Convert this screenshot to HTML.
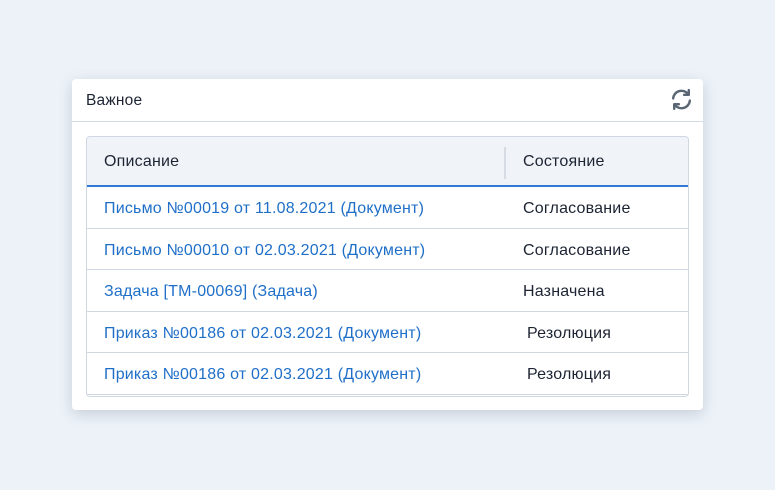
<!DOCTYPE html>
<html><head><meta charset="utf-8"><style>
body{margin:0;width:775px;height:490px;background:#edf2f8;font-family:"Liberation Sans",sans-serif;position:relative;overflow:hidden}
.card{position:absolute;left:72px;top:79px;width:631px;height:331px;background:#fff;border-radius:4px;box-shadow:0 4px 14px rgba(60,80,110,.22)}
.hd{height:42px;border-bottom:1px solid #d3dae4;position:relative}
.hd span{position:absolute;left:14px;top:13px;font-size:15.5px;color:#1c2433;letter-spacing:0.2px}
.tbl{position:absolute;left:14px;top:57px;width:601px;height:259px;border:1px solid #cfd7e2;border-radius:4px;overflow:hidden}
.th{height:48px;background:#f0f3f7;border-bottom:2px solid #2f7ad6;position:relative;font-size:16px;color:#1c2433;letter-spacing:0.2px}
.th .a{position:absolute;left:17px;top:16px}
.th .b{position:absolute;left:436px;top:16px}
.th .d{position:absolute;left:417px;top:10px;width:2px;height:32px;background:#d6dce4}
.r{height:40.5px;border-bottom:1px solid #cfd7e2;position:relative;font-size:16px;letter-spacing:0.2px}
.r .a{position:absolute;left:17px;top:13px;color:#1f6fc9}
.r .b{position:absolute;left:436px;top:13px;color:#1c2433}
</style></head><body>
<div class="card">
<div class="hd"><span>Важное</span>
<svg style="position:absolute;left:597px;top:8px" width="25" height="25" viewBox="0 0 24 24" fill="none" stroke="#5b6675" stroke-width="2.3" stroke-linecap="round" stroke-linejoin="round"><path d="M4 11a8 8 0 0 1 14.5-4"/><path d="M19 3v4.5h-4.5"/><path d="M20 13a8 8 0 0 1-14.5 4"/><path d="M5 21v-4.5h4.5"/></svg>
</div>
<div class="tbl">
<div class="th"><span class="a">Описание</span><span class="d"></span><span class="b">Состояние</span></div>
<div class="r"><span class="a">Письмо №00019 от 11.08.2021 (Документ)</span><span class="b">Согласование</span></div>
<div class="r"><span class="a">Письмо №00010 от 02.03.2021 (Документ)</span><span class="b">Согласование</span></div>
<div class="r"><span class="a">Задача [ТМ-00069] (Задача)</span><span class="b">Назначена</span></div>
<div class="r"><span class="a">Приказ №00186 от 02.03.2021 (Документ)</span><span class="b" style="left:440px">Резолюция</span></div>
<div class="r"><span class="a">Приказ №00186 от 02.03.2021 (Документ)</span><span class="b" style="left:440px">Резолюция</span></div>
</div>
</div>
</body></html>
